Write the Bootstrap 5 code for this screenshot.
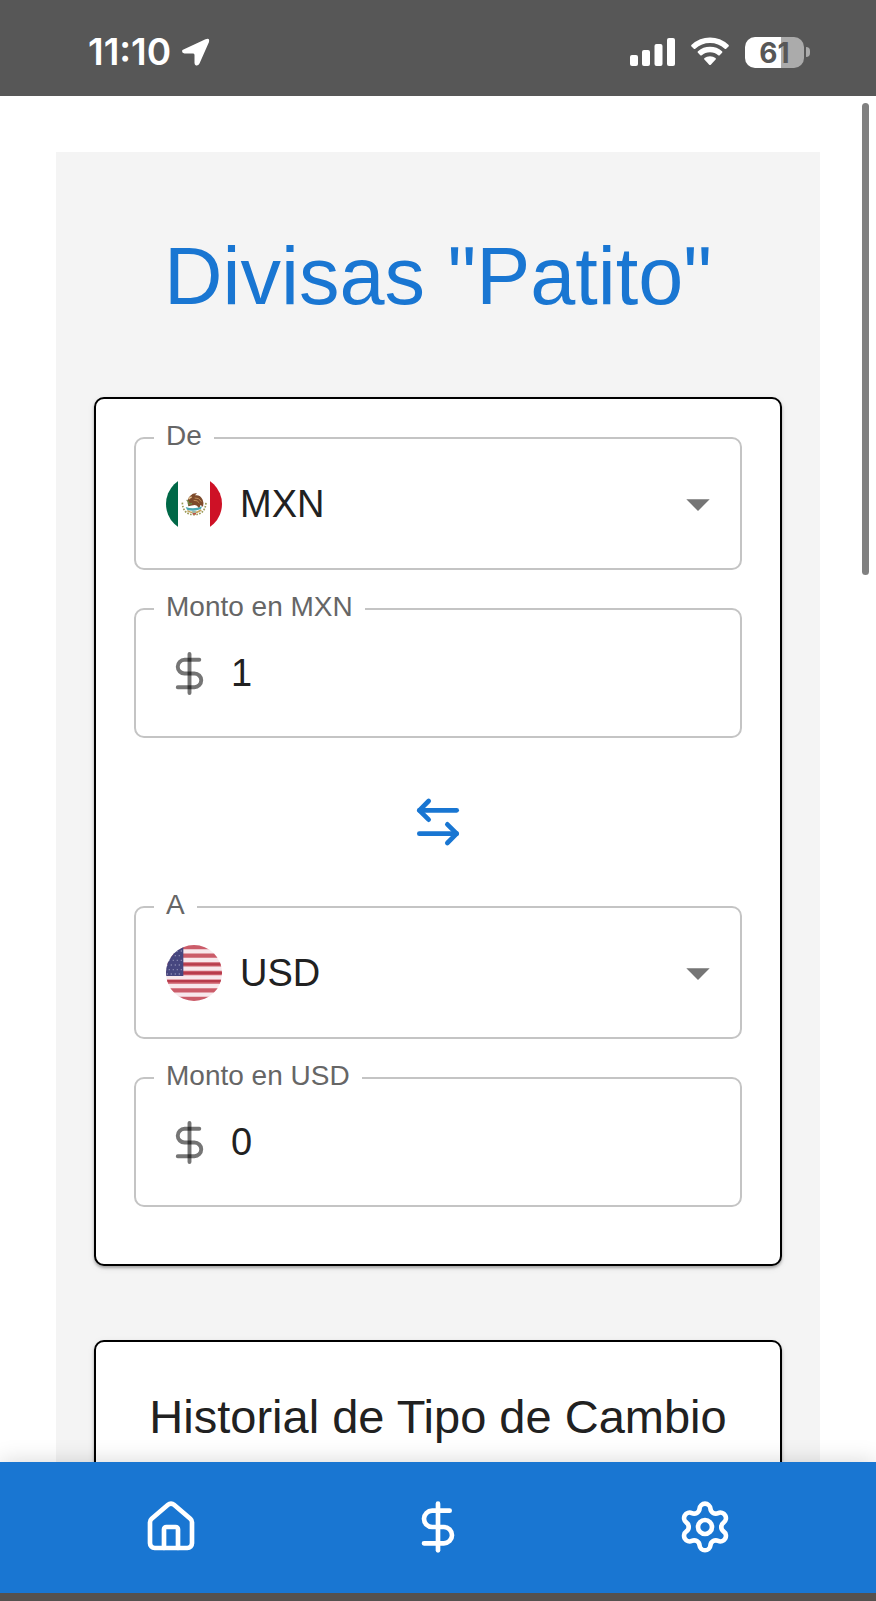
<!DOCTYPE html>
<html lang="es">
<head>
<meta charset="utf-8">
<meta name="viewport" content="width=device-width, initial-scale=1">
<title>Divisas "Patito"</title>
<link href="https://cdn.jsdelivr.net/npm/bootstrap@5.3.0/dist/css/bootstrap.min.css" rel="stylesheet">
<style>
  :root { --brand: #1976d2; --ink: #212121; --chrome: #575757; }
  body { font-family: "Liberation Sans", Arial, sans-serif; color: var(--ink); background: #fff; }
  svg { display: block; flex: none; }

  .status-bar { height: 96px; padding: 8px 66px 0 88px; background: var(--chrome); color: #fff; font-family: Inter, sans-serif; }
  .clock { font-size: 37px; line-height: 40px; font-weight: 600; }
  .clock-row { gap: 10px; }
  .battery { width: 59px; height: 31px; border-radius: 10px; color: var(--chrome); font-size: 28px; line-height: 32px; font-weight: 700;
    background: linear-gradient(90deg, #fff 61%, #ababab 61%); }
  .battery-tip { width: 4px; height: 10px; margin-left: 2px; border-radius: 0 5px 5px 0; background: #ababab; }

  .page-area { padding: 56px 56px 0; }
  .scroll-thumb { top: 7px; right: 7px; width: 7px; height: 472px; border-radius: 4px; background: #808080; }
  .sheet { background: #f4f4f4; padding: 74px 38px; }
  .app-title { font-size: 81px; line-height: 100px; color: var(--brand); margin-bottom: 71px; }
  .panel { background: #fff; border: 2px solid #000; border-radius: 10px; box-shadow: 0 2px 3px rgba(0,0,0,.3), 0 2px 8px rgba(0,0,0,.06); }
  .panel-form { padding: 38px 38px 57px; margin-bottom: 74px; }
  .panel-history { padding: 47px 38px; min-height: 400px; }
  .panel-title { font-size: 47px; line-height: 56px; }

  .field { border: 2px solid #c4c4c4; border-radius: 10px; padding: 0 30px; height: 130px; gap: 18px; }
  .field-select { height: 133px; }
  .field label { top: -17px; left: 18px; padding: 0 12px; background: #fff; color: #666; font-size: 28px; line-height: 28px; }
  .field select, .field input { appearance: none; border: 0; outline: 0; padding: 0; background: transparent; color: var(--ink); font-size: 38px; line-height: 48px; height: 100%; min-width: 0; }
  .field input { font-family: inherit; }
  .caret { right: 14px; pointer-events: none; }
  .stack { gap: 38px; }
  .line-icon { fill: none; stroke: currentColor; stroke-width: 2; stroke-linecap: round; stroke-linejoin: round; }
  .money { color: rgba(0,0,0,.54); }
  .swap-row { padding: 56px 0; }
  .swap { border: 0; padding: 0; background: transparent; color: var(--brand); }

  .tab-bar { height: 131px; padding: 0 37px 2px; background: var(--brand); box-shadow: 0 0 22px rgba(0,0,0,.16); z-index: 2; }
  .tab-bar a { color: #fff; }
  .home-strip { height: 8px; background: #55514e; z-index: 2; }
</style>
</head>
<body>
<div class="vh-100 d-flex flex-column overflow-hidden">
  <header class="status-bar d-flex flex-shrink-0 align-items-center justify-content-between">
    <div class="clock-row d-flex align-items-center">
      <span class="clock">11:10</span>
      <svg width="30" height="30" viewBox="0 0 30 30" aria-hidden="true"><path d="M3 12.300 24.500 2.300Q29 .5 28 5L18.500 26.500Q17.300 29 15 28.500Q13.500 27.800 13.500 26V18Q13.500 16.500 12.300 16.500H3.500Q1 16.200 1 14Q1 13 3 12.300Z" fill="#fff"/></svg>
    </div>
    <div class="d-flex align-items-center">
      <svg class="me-3" width="45" height="30" viewBox="0 0 45 30" fill="#fff" aria-hidden="true"><rect y="18" width="8" height="11" rx="2"/><rect x="12" y="13" width="8" height="16" rx="2"/><rect x="24.500" y="7" width="8" height="22" rx="2"/><rect x="37" y="1" width="8" height="28" rx="2"/></svg>
      <svg class="me-3" width="38" height="30" viewBox="0 0 38 30" fill="#fff" aria-hidden="true"><path d="M.6 7.800Q8.500.5 19 .5T37.400 7.800Q38.300 8.600 37.500 9.400L35.200 11.700Q34.500 12.400 33.700 11.700Q27.500 6 19 6T4.300 11.700Q3.500 12.400 2.800 11.700L.5 9.400Q-.3 8.600.6 7.800Z"/><path d="M7 14.200Q12 9.800 19 9.800T31 14.200Q31.900 15 31.100 15.800L28.700 18.200Q28 18.900 27.200 18.200Q24 15.300 19 15.300T10.800 18.200Q10 18.900 9.300 18.200L6.900 15.800Q6.100 15 7 14.200Z"/><path d="M13.500 21Q15.800 19.200 19 19.200T24.500 21Q25.300 21.700 24.600 22.500L19.800 27.700Q19 28.500 18.200 27.700L13.400 22.500Q12.700 21.700 13.500 21Z"/></svg>
      <span class="battery text-center">61</span><span class="battery-tip"></span>
    </div>
  </header>

  <main class="page-area position-relative flex-fill overflow-hidden">
    <div class="scroll-thumb position-absolute"></div>
    <div class="sheet">
      <h1 class="app-title text-center text-nowrap fw-normal">Divisas "Patito"</h1>

      <section class="panel panel-form">
        <form>
          <div class="stack d-flex flex-column">
            <div class="field field-select position-relative d-flex align-items-center">
              <label class="position-absolute" for="from">De</label>
              <svg width="56" height="56" viewBox="0 0 168 168" aria-hidden="true">
                <clipPath id="round"><circle cx="84" cy="84" r="84"/></clipPath>
                <g clip-path="url(#round)"><path fill="#fff" d="M0 0h168v168H0z"/><path fill="#006847" d="M0 0h36v168H0z"/><path fill="#ce1126" d="M132 0h36v168h-36z"/></g>
                <path d="M49 80q2 36 35 36t36-36" fill="none" stroke="#9a9a58" stroke-width="5" stroke-dasharray="5 4"/>
                <path d="M64 104q20 13 42-2" fill="none" stroke="#c7a15b" stroke-width="5"/>
                <path d="M59 93q24 9 49-2l-3 8q-22 9-42 2z" fill="#49a9b2"/>
                <path d="M65 82q-2-14 8-23 9-9 20-7l-6 6q15-3 23 13 5 11 1 22-4-6-9-5 2 6-4 7-6-10-16-7-9 2-15 3z" fill="#7d4a2b"/>
                <path d="M86 66q13-2 20 11M83 73q12-1 17 8" fill="none" stroke="#bf8d58" stroke-width="3"/>
                <path d="M62 72q7 4 7 13l9-3" fill="none" stroke="#6f8b45" stroke-width="4"/>
                <path d="M77 63q-7 2-9 7" fill="none" stroke="#e5c594" stroke-width="4"/>
                <path d="M78 104h12l-2 9h-8z" fill="#9bb9a9"/><path d="M80 111h10v5H80z" fill="#bd5545"/>
              </svg>
              <select id="from" class="flex-fill"><option>MXN</option><option>USD</option></select>
              <svg class="caret position-absolute" width="56" height="56" viewBox="0 0 24 24" aria-hidden="true"><path d="M7 10l5 5 5-5z" fill="#757575"/></svg>
            </div>
            <div class="field position-relative d-flex align-items-center">
              <label class="position-absolute" for="amount-from">Monto en MXN</label>
              <svg class="line-icon money" width="47" height="47" viewBox="0 0 24 24" aria-hidden="true"><path d="M12 2v20"/><path d="M17 5H9.500a3.500 3.500 0 0 0 0 7h5a3.500 3.500 0 0 1 0 7H6"/></svg>
              <input id="amount-from" class="flex-fill" type="text" inputmode="decimal" value="1">
            </div>
          </div>

          <div class="swap-row d-flex justify-content-center">
            <button class="swap" type="button" aria-label="Intercambiar divisas">
              <svg class="line-icon" width="56" height="56" viewBox="0 0 24 24"><path d="M8 3 4 7l4 4"/><path d="M4 7h16"/><path d="m16 21 4-4-4-4"/><path d="M20 17H4"/></svg>
            </button>
          </div>

          <div class="stack d-flex flex-column">
            <div class="field field-select position-relative d-flex align-items-center">
              <label class="position-absolute" for="to">A</label>
              <svg width="56" height="56" viewBox="0 0 168 168" aria-hidden="true">
                <g clip-path="url(#round)">
                  <path fill="#f8e8ec" d="M0 0h168v168H0z"/>
                  <path d="M0 6h168M0 32h168M0 58h168M0 84h168M0 110h168M0 136h168M0 162h168" stroke="#cb5c69" stroke-width="13"/>
                  <path d="M0 58h168M0 84h168M0 108h168" stroke="#b83c4c" stroke-width="6"/>
                  <path fill="#46467f" d="M0 0h52v93H0z"/>
                  <path d="M8 18h44M2 32h44M8 46h44M2 60h44M8 74h44M2 87h44" stroke="#8585ae" stroke-width="4" stroke-dasharray="4 8"/>
                </g>
              </svg>
              <select id="to" class="flex-fill"><option>USD</option><option>MXN</option></select>
              <svg class="caret position-absolute" width="56" height="56" viewBox="0 0 24 24" aria-hidden="true"><path d="M7 10l5 5 5-5z" fill="#757575"/></svg>
            </div>
            <div class="field position-relative d-flex align-items-center">
              <label class="position-absolute" for="amount-to">Monto en USD</label>
              <svg class="line-icon money" width="47" height="47" viewBox="0 0 24 24" aria-hidden="true"><path d="M12 2v20"/><path d="M17 5H9.500a3.500 3.500 0 0 0 0 7h5a3.500 3.500 0 0 1 0 7H6"/></svg>
              <input id="amount-to" class="flex-fill" type="text" inputmode="decimal" value="0">
            </div>
          </div>
        </form>
      </section>

      <section class="panel panel-history">
        <h2 class="panel-title text-center text-nowrap fw-normal mb-0">Historial de Tipo de Cambio</h2>
      </section>
    </div>
  </main>

  <nav class="tab-bar position-relative row g-0 flex-shrink-0 align-items-center" aria-label="Principal">
    <a class="col d-flex justify-content-center" href="#inicio" aria-label="Inicio"><svg class="line-icon" width="56" height="56" viewBox="0 0 24 24"><path d="M15 21v-8a1 1 0 0 0-1-1h-4a1 1 0 0 0-1 1v8"/><path d="M3 10a2 2 0 0 1 .709-1.528l7-5.999a2 2 0 0 1 2.582 0l7 5.999A2 2 0 0 1 21 10v9a2 2 0 0 1-2 2H5a2 2 0 0 1-2-2z"/></svg></a>
    <a class="col d-flex justify-content-center" href="#divisas" aria-label="Divisas"><svg class="line-icon" width="56" height="56" viewBox="0 0 24 24"><path d="M12 2v20"/><path d="M17 5H9.500a3.500 3.500 0 0 0 0 7h5a3.500 3.500 0 0 1 0 7H6"/></svg></a>
    <a class="col d-flex justify-content-center" href="#ajustes" aria-label="Ajustes"><svg class="line-icon" width="56" height="56" viewBox="0 0 24 24"><path d="M9.671 4.136a2.340 2.340 0 0 1 4.659 0 2.340 2.340 0 0 0 3.319 1.915 2.340 2.340 0 0 1 2.330 4.033 2.340 2.340 0 0 0 0 3.831 2.340 2.340 0 0 1-2.330 4.033 2.340 2.340 0 0 0-3.319 1.915 2.340 2.340 0 0 1-4.659 0 2.340 2.340 0 0 0-3.320-1.915 2.340 2.340 0 0 1-2.330-4.033 2.340 2.340 0 0 0 0-3.831A2.340 2.340 0 0 1 6.350 6.051a2.340 2.340 0 0 0 3.319-1.915"/><circle cx="12" cy="12" r="3"/></svg></a>
  </nav>
  <div class="home-strip flex-shrink-0"></div>
</div>
<script src="https://cdn.jsdelivr.net/npm/bootstrap@5.3.0/dist/js/bootstrap.bundle.min.js"></script>
</body>
</html>
